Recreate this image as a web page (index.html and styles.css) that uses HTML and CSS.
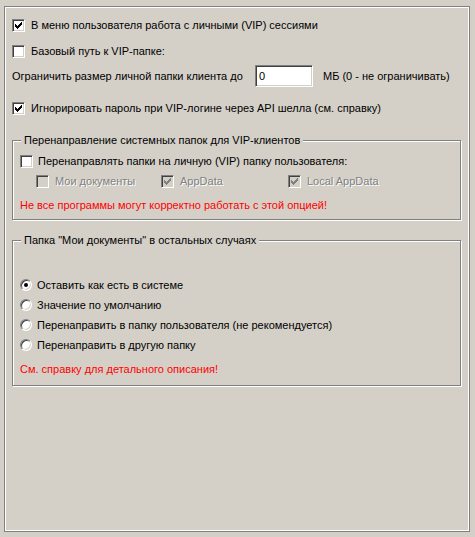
FILE: index.html
```html
<!DOCTYPE html>
<html lang="ru">
<head>
<meta charset="utf-8">
<link rel="stylesheet" href="styles.css">
</head>
<body>
<div class="panel">
  <div class="row r1">
    <span class="cb"><svg class="chk" viewBox="0 0 7 7" width="7" height="7"><path d="M6 0h1v1h-1z M5 1h2v1h-2z M0 2h1v1h-1z M4 2h3v1h-3z M0 3h2v1h-2z M3 3h3v1h-3z M0 4h5v1h-5z M1 5h3v1h-3z M2 6h1v1h-1z"/></svg></span>
    <span class="lbl">В меню пользователя работа с личными (VIP) сессиями</span>
  </div>
  <div class="row r2">
    <span class="cb"></span>
    <span class="lbl">Базовый путь к VIP-папке:</span>
  </div>
  <div class="row r3">
    <span class="plain">Ограничить размер личной папки клиента до</span>
    <span class="edit">0</span>
    <span class="unit">МБ (0 - не ограничивать)</span>
  </div>
  <div class="row r4">
    <span class="cb"><svg class="chk" viewBox="0 0 7 7" width="7" height="7"><path d="M6 0h1v1h-1z M5 1h2v1h-2z M0 2h1v1h-1z M4 2h3v1h-3z M0 3h2v1h-2z M3 3h3v1h-3z M0 4h5v1h-5z M1 5h3v1h-3z M2 6h1v1h-1z"/></svg></span>
    <span class="lbl">Игнорировать пароль при VIP-логине через API шелла (см. справку)</span>
  </div>

  <fieldset class="group g1">
    <legend>Перенаправление системных папок для VIP-клиентов</legend>
    <div class="grow">
      <span class="cb"></span>
      <span class="lbl2">Перенаправлять папки на личную (VIP) папку пользователя:</span>
    </div>
    <div class="subrow">
      <div class="subitem">
        <span class="cb dis"></span>
        <span class="lbl dtext">Мои документы</span>
      </div>
      <div class="subitem">
        <span class="cb dis"><svg class="chk" viewBox="0 0 7 7" width="7" height="7"><path d="M6 0h1v1h-1z M5 1h2v1h-2z M0 2h1v1h-1z M4 2h3v1h-3z M0 3h2v1h-2z M3 3h3v1h-3z M0 4h5v1h-5z M1 5h3v1h-3z M2 6h1v1h-1z"/></svg></span>
        <span class="lbl dtext">AppData</span>
      </div>
      <div class="subitem">
        <span class="cb dis"><svg class="chk" viewBox="0 0 7 7" width="7" height="7"><path d="M6 0h1v1h-1z M5 1h2v1h-2z M0 2h1v1h-1z M4 2h3v1h-3z M0 3h2v1h-2z M3 3h3v1h-3z M0 4h5v1h-5z M1 5h3v1h-3z M2 6h1v1h-1z"/></svg></span>
        <span class="lbl dtext">Local AppData</span>
      </div>
    </div>
    <div class="warn">Не все программы могут корректно работать с этой опцией!</div>
  </fieldset>

  <fieldset class="group g2">
    <legend>Папка "Мои документы" в остальных случаях</legend>
    <div class="grow rfirst">
      <span class="rb on"><span class="dot"></span></span>
      <span class="lbl2">Оставить как есть в системе</span>
    </div>
    <div class="grow">
      <span class="rb"></span>
      <span class="lbl2">Значение по умолчанию</span>
    </div>
    <div class="grow">
      <span class="rb"></span>
      <span class="lbl2">Перенаправить в папку пользователя (не рекомендуется)</span>
    </div>
    <div class="grow">
      <span class="rb"></span>
      <span class="lbl2">Перенаправить в другую папку</span>
    </div>
    <div class="warn">См. справку для детального описания!</div>
  </fieldset>
</div>
</body>
</html>
```

FILE: styles.css
```css
html, body {
  margin: 0;
  padding: 0;
}
body {
  background: #d4d0c8;
  font-family: "Liberation Sans", Arial, sans-serif;
  font-size: 11px;
  color: #000;
  width: 475px;
  height: 537px;
  overflow: hidden;
}
.panel {
  margin: 6px 0 0 4px;
  width: 466px;
  height: 526px;
  box-sizing: border-box;
  border: 1px solid #808080;
  box-shadow: inset 0 0 0 1px #fff;
  padding: 8px 8px 0 7px;
}
.row {
  display: flex;
  align-items: center;
  height: 20px;
}
.r2 { margin-top: 6px; }
.r3 { margin-top: 4px; height: 22px; }
.r4 { margin-top: 11px; }

.cb {
  flex: none;
  display: block;
  width: 13px;
  height: 13px;
  box-sizing: border-box;
  border: 1px solid;
  border-color: #808080 #fff #fff #808080;
  background: #fff;
  box-shadow: inset 1px 1px 0 #404040, inset -1px -1px 0 #d4d0c8;
  padding: 2px;
}
.cb.dis { background: #d4d0c8; }
.chk {
  display: block;
  fill: #000;
}
.cb.dis .chk { fill: #808080; }

.lbl { margin-left: 6px; white-space: nowrap; }
.lbl2 { margin-left: 5px; white-space: nowrap; }
.plain {
  flex: none;
  width: 240px;
  white-space: nowrap;
}
.dtext {
  color: #808080;
  text-shadow: 1px 1px 0 #fff;
}

.edit {
  flex: none;
  margin-left: 3px;
  width: 58px;
  height: 22px;
  box-sizing: border-box;
  border: 1px solid;
  border-color: #808080 #fff #fff #808080;
  box-shadow: inset 1px 1px 0 #404040, inset -1px -1px 0 #d4d0c8;
  background: #fff;
  padding: 3px 0 0 3px;
  line-height: 14px;
}
.unit { margin-left: 10px; white-space: nowrap; }

.group {
  margin: 16px 0 0 0;
  padding: 5px 8px 5px 7px;
  border: 1px solid #808080;
  box-shadow: inset 1px 1px 0 #fff, 1px 1px 0 #fff;
  min-inline-size: 0;
}
.group legend {
  margin-left: 1px;
  padding: 0 3px;
  line-height: 13px;
  height: 13px;
  background: #d4d0c8;
}
.g2 {
  margin-top: 14px;
  padding-top: 29px;
  padding-bottom: 7px;
}
.grow {
  display: flex;
  align-items: center;
  height: 18px;
}
.grow + .grow { margin-top: 2px; }
.subrow {
  display: grid;
  grid-template-columns: 125px 127px auto;
  margin-top: 2px;
  padding-left: 16px;
  height: 18px;
}
.subitem {
  display: flex;
  align-items: center;
}
.warn {
  margin-top: 6px;
  height: 18px;
  line-height: 18px;
  color: #ff0000;
}

.rb {
  flex: none;
  display: flex;
  align-items: center;
  justify-content: center;
  width: 12px;
  height: 12px;
  box-sizing: border-box;
  border-radius: 50%;
  border: 1px solid;
  border-color: #808080 #fff #fff #808080;
  background: #fff;
  box-shadow: inset 1px 1px 0 #404040, inset -1px -1px 0 #d4d0c8;
}
.rb .dot {
  width: 4px;
  height: 4px;
  border-radius: 50%;
  background: #000;
}
```
